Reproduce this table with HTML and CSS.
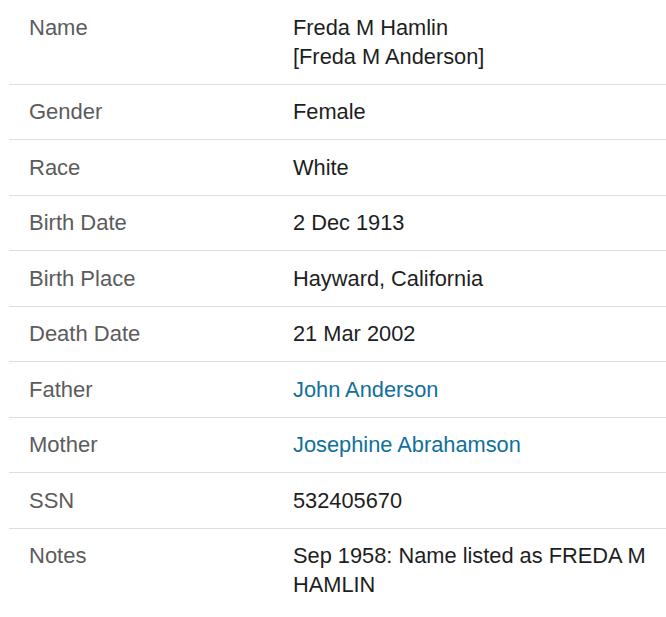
FILE: index.html
```html
<!DOCTYPE html>
<html>
<head>
<meta charset="utf-8">
<link rel="stylesheet" href="styles.css">
</head>
<body>
<table class="facts">
  <tr><th>Name</th><td>Freda M Hamlin<br>[Freda M Anderson]</td></tr>
  <tr><th>Gender</th><td>Female</td></tr>
  <tr><th>Race</th><td>White</td></tr>
  <tr><th>Birth Date</th><td>2 Dec 1913</td></tr>
  <tr><th>Birth Place</th><td>Hayward, California</td></tr>
  <tr><th>Death Date</th><td>21 Mar 2002</td></tr>
  <tr><th>Father</th><td><a class="link" href="#">John Anderson</a></td></tr>
  <tr><th>Mother</th><td><a class="link" href="#">Josephine Abrahamson</a></td></tr>
  <tr><th>SSN</th><td>532405670</td></tr>
  <tr><th>Notes</th><td>Sep 1958: Name listed as FREDA M HAMLIN</td></tr>
</table>
</body>
</html>
```
FILE: styles.css
```css
html, body {
  margin: 0;
  padding: 0;
  background: #ffffff;
}
body {
  padding-left: 9px;
}
.facts {
  width: 657px;
  border-collapse: collapse;
  font-family: "Liberation Sans", Arial, sans-serif;
}
.facts tr {
  border-top: 1px solid #dedede;
}
.facts tr:first-child {
  border-top: none;
}
.facts th {
  width: 264px;
  padding: 12.75px 0 12.75px 20px;
  text-align: left;
  vertical-align: top;
  font-weight: normal;
  font-size: 22px;
  line-height: 29px;
  color: #5c5c5c;
}
.facts td {
  padding: 12.75px 10px 12.75px 0;
  vertical-align: top;
  font-size: 21.8px;
  line-height: 29px;
  color: #1e1e1e;
}
.link {
  color: #10709b;
  text-decoration: none;
}
```
